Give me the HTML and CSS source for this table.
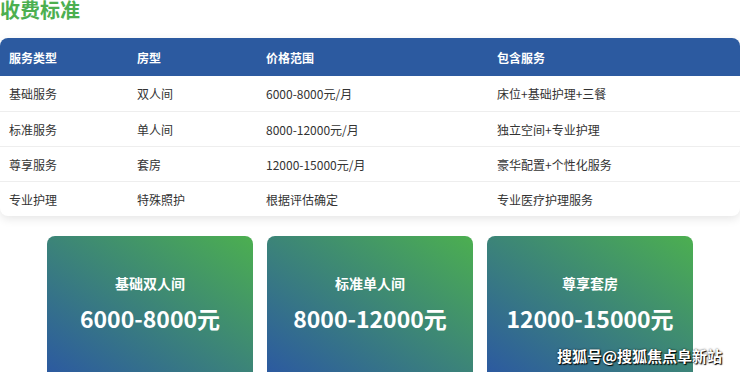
FILE: index.html
```html
<!doctype html>
<html lang="zh-CN">
<head>
    <meta charset="utf-8">
    <title>收费标准</title>
    <meta name="viewport" content="width=device-width, initial-scale=1">
    <link rel="stylesheet" href="styles.css">
</head>
<body class="fee-body">
<main class="fee-page">
    <h2 class="fee-title">收费标准</h2>

    <table class="fee-table">
        <thead>
        <tr>
            <th class="col-type">服务类型</th>
            <th class="col-room">房型</th>
            <th class="col-price">价格范围</th>
            <th>包含服务</th>
        </tr>
        </thead>
        <tbody>
        <tr>
            <td>基础服务</td>
            <td>双人间</td>
            <td>6000-8000元/月</td>
            <td>床位+基础护理+三餐</td>
        </tr>
        <tr>
            <td>标准服务</td>
            <td>单人间</td>
            <td>8000-12000元/月</td>
            <td>独立空间+专业护理</td>
        </tr>
        <tr>
            <td>尊享服务</td>
            <td>套房</td>
            <td>12000-15000元/月</td>
            <td>豪华配置+个性化服务</td>
        </tr>
        <tr>
            <td>专业护理</td>
            <td>特殊照护</td>
            <td>根据评估确定</td>
            <td>专业医疗护理服务</td>
        </tr>
        </tbody>
    </table>

    <div class="fee-cards">
        <div class="fee-card">
            <h3 class="fee-card-name">基础双人间</h3>
            <p class="fee-card-price">6000-8000元</p>
        </div>
        <div class="fee-card">
            <h3 class="fee-card-name">标准单人间</h3>
            <p class="fee-card-price">8000-12000元</p>
        </div>
        <div class="fee-card">
            <h3 class="fee-card-name">尊享套房</h3>
            <p class="fee-card-price">12000-15000元</p>
        </div>
    </div>
</main>

<div class="watermark">搜狐号@搜狐焦点阜新站</div>
</body>
</html>
```

FILE: styles.css
```css
.fee-body {
    margin: 0;
    background: #FFFFFF;
    font-family: "Noto Sans CJK SC", "Noto Sans", sans-serif;
    color: #333;
    overflow: hidden;
    height: 372px;
}

.fee-page {
    width: 740px;
}

.fee-title {
    margin: -2px 0 0;
    font-size: 20px;
    line-height: 24px;
    font-weight: bold;
    color: #4caf50;
}

.fee-table {
    width: 100%;
    margin-top: 16px;
    border-collapse: separate;
    border-spacing: 0;
    border-radius: 8px;
    overflow: hidden;
    box-shadow: 0 3px 10px rgba(0, 0, 0, 0.1);
    font-size: 12px;
}

.fee-table th {
    background: #2c5aa0;
    color: #FFFFFF;
    text-align: left;
    font-weight: bold;
    padding: 0 9px;
    height: 38px;
}

.fee-table td {
    padding: 0 9px;
    height: 34px;
    border-top: 1px solid #eee;
}

.fee-table tbody tr:first-child td {
    border-top: 0;
    height: 35px;
}

.fee-table .col-type {
    width: 110px;
}

.fee-table .col-room {
    width: 111px;
}

.fee-table .col-price {
    width: 213px;
}

.fee-cards {
    display: flex;
    justify-content: center;
    gap: 14px;
    margin-top: 20px;
}

.fee-card {
    width: 206px;
    height: 136px;
    box-sizing: border-box;
    padding: 37px 10px 0;
    border-radius: 8px 8px 0 0;
    background: linear-gradient(to top right, #2c5aa0, #4caf50);
    color: #FFFFFF;
    text-align: center;
}

.fee-card-name {
    margin: 0;
    font-size: 14px;
    line-height: 20px;
    font-weight: bold;
}

.fee-card-price {
    margin: 9px 0 0;
    font-size: 23px;
    line-height: 32px;
    font-weight: bold;
}

.watermark {
    position: absolute;
    right: 18px;
    bottom: 6px;
    font-size: 15px;
    font-weight: bold;
    color: #FFFFFF;
    text-shadow: 1px 1px 1px #000, 0 0 2px rgba(0, 0, 0, 0.8);
}
```
